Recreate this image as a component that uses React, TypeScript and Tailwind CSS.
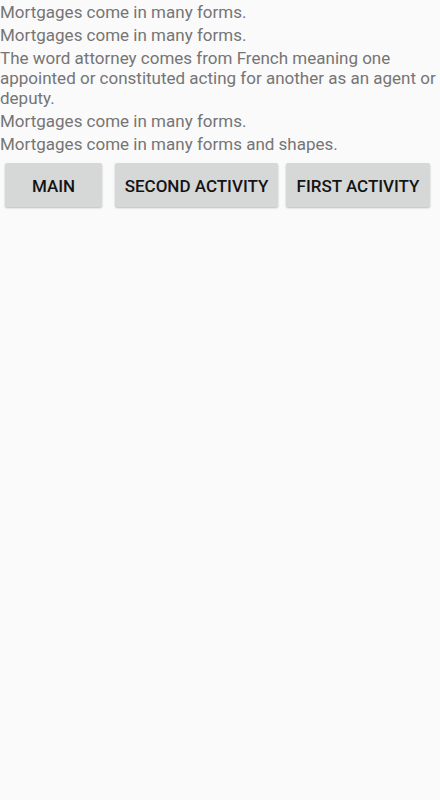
export default function App() {
  const lines = [
    'Mortgages come in many forms.',
    'Mortgages come in many forms.',
    'The word attorney comes from French meaning one appointed or constituted acting for another as an agent or deputy.',
    'Mortgages come in many forms.',
    'Mortgages come in many forms and shapes.',
  ]

  return (
    <div className="min-h-[800px] w-[440px] bg-[#fafafa] font-['Roboto',sans-serif]">
      <div className="flex flex-col gap-[3px] pt-[2px]">
        {lines.map((text, i) => (
          <p key={i} className="text-[17px] leading-[20px] text-[#757575]">
            {text}
          </p>
        ))}
      </div>
      <div className="mt-[9px] flex items-start">
        <button className="ml-[5px] h-[44px] w-[97px] rounded-[2px] bg-[#d6d7d7] pt-[3px] text-[17px] font-medium text-[#141414] shadow-[0_1px_2px_rgba(0,0,0,0.25)]">
          MAIN
        </button>
        <button className="ml-[13px] h-[44px] w-[163px] rounded-[2px] bg-[#d6d7d7] pt-[3px] text-[17px] font-medium text-[#141414] shadow-[0_1px_2px_rgba(0,0,0,0.25)]">
          SECOND ACTIVITY
        </button>
        <button className="ml-[8px] h-[44px] w-[144px] rounded-[2px] bg-[#d6d7d7] pt-[3px] text-[17px] font-medium text-[#141414] shadow-[0_1px_2px_rgba(0,0,0,0.25)]">
          FIRST ACTIVITY
        </button>
      </div>
    </div>
  )
}
